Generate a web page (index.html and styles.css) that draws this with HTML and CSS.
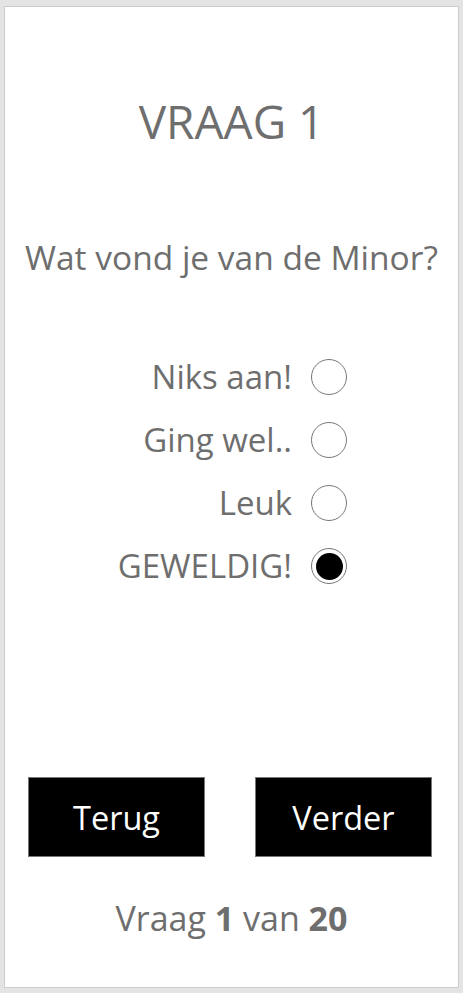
FILE: index.html
```html
<!DOCTYPE html>
<html lang="nl">
<head>
<meta charset="utf-8">
<title>Vraag 1</title>
<link rel="stylesheet" href="styles.css">
</head>
<body>
<main class="panel">
  <h1 class="title">VRAAG 1</h1>
  <p class="question">Wat vond je van de Minor?</p>
  <div class="options">
    <label class="option"><span class="label">Niks aan!</span><span class="radio"></span></label>
    <label class="option"><span class="label">Ging wel..</span><span class="radio"></span></label>
    <label class="option"><span class="label">Leuk</span><span class="radio"></span></label>
    <label class="option"><span class="label">GEWELDIG!</span><span class="radio checked"></span></label>
  </div>
  <div class="buttons">
    <button class="btn">Terug</button>
    <button class="btn">Verder</button>
  </div>
  <p class="progress">Vraag <b>1</b> van <b>20</b></p>
</main>
</body>
</html>
```
FILE: styles.css
```css
html, body {
  margin: 0;
  padding: 0;
  background: #e4e4e4;
}
body {
  padding: 6px 4px 5px 4px;
  font-family: "Open Sans", "Noto Sans", sans-serif;
  color: #6e6e6e;
}
.panel {
  box-sizing: border-box;
  width: 455px;
  height: 982px;
  background: #fff;
  border: 1px solid #cdcdcd;
  display: flex;
  flex-direction: column;
  align-items: center;
}
.title {
  margin: 84px 0 0 0;
  font-size: 46px;
  font-weight: 400;
  line-height: 60px;
}
.question {
  margin: 84px 0 0 0;
  font-size: 33.5px;
  line-height: 44px;
}
.options {
  align-self: stretch;
  margin-top: 80px;
  padding-right: 111px;
  display: flex;
  flex-direction: column;
  align-items: flex-end;
  gap: 27px;
}
.option {
  display: flex;
  align-items: center;
  gap: 19px;
  height: 36px;
}
.label {
  font-size: 33px;
  line-height: 36px;
}
.radio {
  box-sizing: border-box;
  width: 36px;
  height: 36px;
  border: 1px solid #777;
  border-radius: 50%;
  display: flex;
  align-items: center;
  justify-content: center;
}
.radio.checked::after {
  content: "";
  width: 27px;
  height: 27px;
  border-radius: 50%;
  background: #000;
}
.buttons {
  align-self: stretch;
  margin-top: 193px;
  padding: 0 26px 0 23px;
  display: flex;
  justify-content: space-between;
}
.btn {
  width: 177px;
  height: 80px;
  background: #000;
  color: #fff;
  border: 1px solid #777;
  font-family: "Open Sans", "Noto Sans", sans-serif;
  font-size: 32.5px;
  padding: 0;
}
.progress {
  margin: 41px 0 0 0;
  font-size: 34px;
  line-height: 40px;
}
.progress b {
  font-weight: 700;
}
```
